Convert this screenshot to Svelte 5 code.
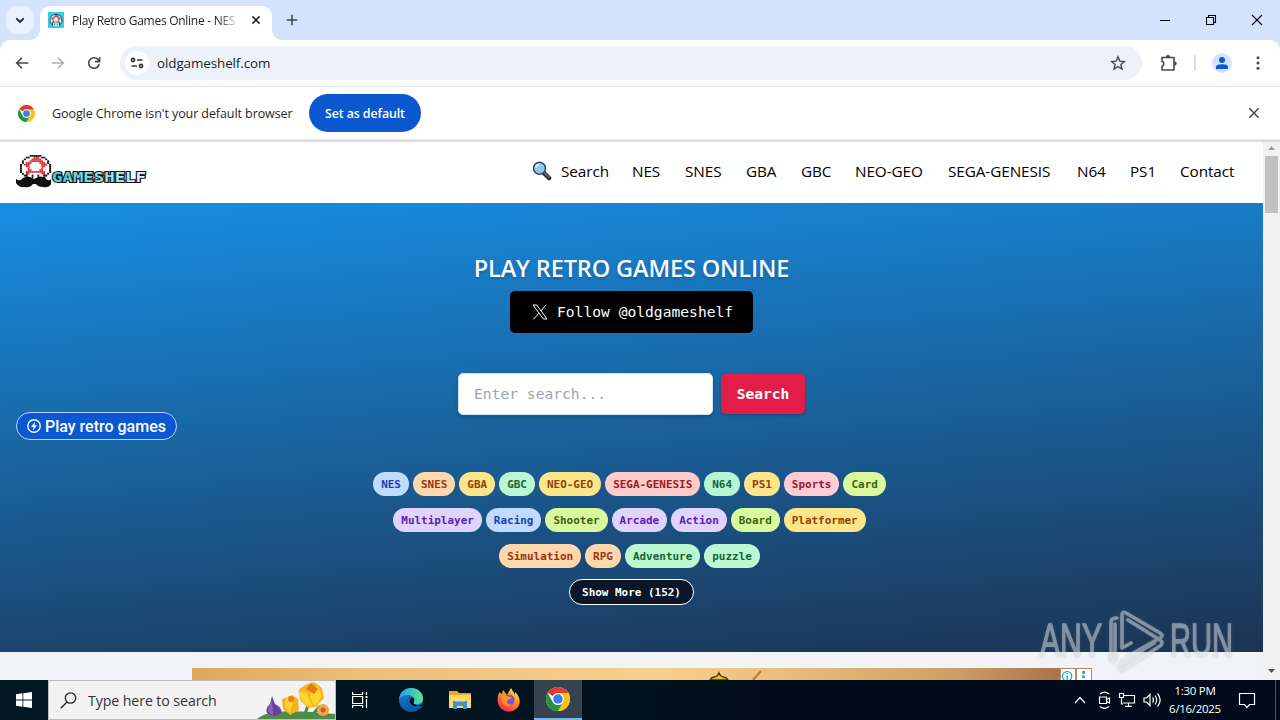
<script lang="ts">
    let search = $state("");

    const links = ["Search", "NES", "SNES", "GBA", "GBC", "NEO-GEO", "SEGA-GENESIS", "N64", "PS1", "Contact"];

    const tagRows = [
        [
            ["NES", "blue"], ["SNES", "orange"], ["GBA", "amber"], ["GBC", "green"], ["NEO-GEO", "amber"],
            ["SEGA-GENESIS", "red"], ["N64", "emerald"], ["PS1", "amber"], ["Sports", "rose"], ["Card", "lime"],
        ],
        [
            ["Multiplayer", "violet"], ["Racing", "blue"], ["Shooter", "lime"], ["Arcade", "violet"],
            ["Action", "violet"], ["Board", "lime"], ["Platformer", "amber"],
        ],
        [["Simulation", "orange"], ["RPG", "orange"], ["Adventure", "green"], ["puzzle", "green"]],
    ];

    // one character per pixel: k outline, r cap, d shade, w white
    const mushroom = [
        "......kkkkkk......",
        "....kkwwrrrwkk....",
        "...kwwwrrrrrwwk...",
        "..kwwwrrrrrrrwwk..",
        "..kwrrrwwwwrrrwk..",
        ".kwrrrwwwwwwrrrwk.",
        ".kwwrrwwwwwwrrwwk.",
        ".kwwwrwwwwwwrwwwk.",
        ".kwwwrrwwwwrrwwwk.",
        ".kwwrrrrrrrrrrwwk.",
        "..kwdrwwwwwwrdwk..",
        "...kkwwkwwkwwkk...",
        "....kwwkwwkwwk....",
        "....kwwwwwwwwk....",
    ];
    const ink = { k: "#111", r: "#e22a2f", d: "#b91c25", w: "#fff" };
</script>

{#snippet chrome(size)}
    <svg width={size} height={size} viewBox="0 0 48 48">
        <circle cx="24" cy="24" r="24" fill="#fff" />
        <path fill="#e33b2e" d="M24 24 3.2 12A24 24 0 0 1 44.8 12Z" />
        <path fill="#fbc116" d="M24 12H44.8A24 24 0 0 1 24 48L34.4 30Z" />
        <path fill="#229342" d="M3.2 12A24 24 0 0 0 24 48L34.4 30A12 12 0 0 1 13.6 30Z" />
        <circle cx="24" cy="24" r="12" fill="#fff" />
        <circle cx="24" cy="24" r="9.5" fill="#3b7ded" />
    </svg>
{/snippet}

{#snippet sprite(width, height)}
    <svg {width} {height} viewBox="0 0 18 14" preserveAspectRatio="none">
        {#each mushroom as row, y}
            {#each row as cell, x}
                {#if cell != "."}
                    <rect {x} {y} width="1.05" height="1.05" fill={ink[cell]} />
                {/if}
            {/each}
        {/each}
    </svg>
{/snippet}

<div class="screen">
    <div class="tabstrip">
        <button class="tab-search" aria-label="Search tabs">
            <svg width="10" height="7" viewBox="0 0 10 7"><path d="M1.3 1.3 5 5l3.7-3.7" fill="none" stroke="#1f1f1f" stroke-width="1.8" /></svg>
        </button>
        <div class="tab">
            <span class="favicon">{@render sprite(14, 12)}</span>
            <span class="tab-title">Play Retro Games Online - NES</span>
            <svg width="10" height="10" viewBox="0 0 10 10"><path d="m1.4 1.4 7.2 7.2m0-7.2L1.4 8.6" stroke="#1f1f1f" stroke-width="1.5" /></svg>
        </div>
        <svg class="plus" width="12" height="12" viewBox="0 0 12 12"><path d="M6 .8v10.4M.8 6h10.4" stroke="#444" stroke-width="1.5" /></svg>
        <div class="window-buttons">
            <svg width="12" height="12" viewBox="0 0 12 12"><path d="M1 6.5h10" stroke="#000" /></svg>
            <svg width="12" height="12" viewBox="0 0 12 12"><path d="M1.5 3.5h7v7h-7zM3.5 3V1.5h7v7H9" fill="none" stroke="#000" stroke-width="1.1" /></svg>
            <svg width="12" height="12" viewBox="0 0 12 12"><path d="m1 1 10 10m0-10L1 11" stroke="#000" stroke-width="1.1" /></svg>
        </div>
    </div>

    <div class="toolbar">
        <div class="history">
            <svg width="14" height="14" viewBox="0 0 14 14"><path d="M13.3 7H2M7 1.7 1.7 7 7 12.3" fill="none" stroke="#474747" stroke-width="1.6" /></svg>
            <svg width="14" height="14" viewBox="0 0 14 14"><path d="M.7 7H12M7 1.7 12.3 7 7 12.3" fill="none" stroke="#b0b0b0" stroke-width="1.6" /></svg>
            <svg width="14" height="14" viewBox="0 0 14 14"><path d="M12.2 8a5.3 5.3 0 1 1-1.3-4.6l1.6 1.8M12.6 1v4.6H8" fill="none" stroke="#474747" stroke-width="1.6" /></svg>
        </div>
        <div class="omnibox">
            <span class="site-info">
                <svg width="14" height="12" viewBox="0 0 14 12"><g fill="none" stroke="#333" stroke-width="1.6"><circle cx="3" cy="3" r="1.6" /><path d="M7 3h5.500M1.500 9H7" /><circle cx="11" cy="9" r="1.6" /></g></svg>
            </span>
            <span class="url">oldgameshelf.com</span>
            <svg width="16" height="16" viewBox="0 0 16 16"><path d="m8 1.8 1.8 4.3 4.6.4-3.5 3 1.1 4.6-4-2.5-4 2.5 1.1-4.6-3.5-3 4.6-.4z" fill="none" stroke="#474747" stroke-width="1.4" /></svg>
        </div>
        <svg class="puzzle" width="18" height="18" viewBox="0 0 18 18"><path d="M2 3.5h12V16H2v-3.7c2.400-.8 2.400-4.200 0-5z" fill="none" stroke="#474747" stroke-width="1.6" stroke-linejoin="round" /><path d="M6 3c0-3 4-3 4 0zM14.5 7.500c3 0 3 4 0 4z" fill="#474747" /></svg>
        <span class="separator"></span>
        <span class="profile">
            <svg width="12" height="12" viewBox="0 0 12 12" fill="#0b57d0"><circle cx="6" cy="3" r="3" /><path d="M0 12V9.8C0 6.5 12 6.5 12 9.8V12z" /></svg>
        </span>
        <svg width="4" height="16" viewBox="0 0 4 16" fill="#474747"><circle cx="2" cy="2.8" r="1.5" /><circle cx="2" cy="8" r="1.5" /><circle cx="2" cy="13.2" r="1.5" /></svg>
    </div>

    <div class="infobar">
        {@render chrome(17)}
        <span class="info-text">Google Chrome isn't your default browser</span>
        <button class="default-button">Set as default</button>
        <svg class="dismiss" width="12" height="12" viewBox="0 0 12 12"><path d="m1.3 1.3 9.4 9.4m0-9.4-9.4 9.4" stroke="#474747" stroke-width="1.5" /></svg>
    </div>

    <div class="viewport">
        <div class="page">
            <header>
                <svg class="logo" width="134" height="36" viewBox="0 0 134 36">
                    <g transform="translate(3 1)">{@render sprite(35, 25)}</g>
                    <path d="M1 25q4 3 7-1 5-3 9 0l2 1 2-1q5-3 9 0 4 4 6 1v5q-2 4-8 3-5 0-7-3h-3q-3 4-8 3-6 1-9-4z" fill="#111" />
                    <defs>
                        <linearGradient id="cyan" x2="1"><stop stop-color="#45cddb" /><stop offset=".6" stop-color="#96e2e7" /><stop offset="1" stop-color="#f2fbfb" /></linearGradient>
                    </defs>
                    <text x="37" y="28" textLength="94" lengthAdjust="spacingAndGlyphs" fill="url(#cyan)" stroke="#111" stroke-width="2" paint-order="stroke">GAMESHELF</text>
                </svg>
                <nav>
                    <svg class="glass" width="20" height="20" viewBox="0 0 20 20">
                        <path d="m11 11 6 6" stroke="#222" stroke-width="4.500" stroke-linecap="round" />
                        <path d="m12.5 12 4.5 4.5" stroke="#666" stroke-width="2" stroke-linecap="round" />
                        <circle cx="7.5" cy="7.3" r="6" fill="#8fc7f2" stroke="#34495b" stroke-width="1.5" />
                        <path d="M4 7c0-2 1.4-3.4 3.5-3.4" fill="none" stroke="#d5edff" stroke-width="1.6" />
                    </svg>
                    {#each links as link}
                        <a href="#top">{link}</a>
                    {/each}
                </nav>
            </header>

            <main>
                <h1>PLAY RETRO GAMES ONLINE</h1>
                <a class="follow" href="#top">
                    <svg width="16" height="16" viewBox="0 0 16 16" fill="none" stroke="#fff"><path d="M1 1h3.6L15 15h-3.6zM14.2.8 8.9 6.9M7 9.2 1.5 15.3" stroke-width="1" /></svg>
                    <span>Follow @oldgameshelf</span>
                </a>
                <form onsubmit={(e) => e.preventDefault()}>
                    <input type="text" placeholder="Enter search..." bind:value={search} />
                    <button>Search</button>
                </form>
                <div class="tags">
                    {#each tagRows as row}
                        <div class="tag-row">
                            {#each row as [name, color]}
                                <span class="tag {color}">{name}</span>
                            {/each}
                        </div>
                    {/each}
                </div>
                <button class="more">Show More (152)</button>
            </main>

            <div class="ad">
                <svg width="900" height="12" viewBox="0 0 900 12">
                    <path d="M518 12q2-3 5-3 3-1 4-4 1 3 4 4 3 0 5 3z" fill="#edbd32" stroke="#4a3415" stroke-width="1.3" />
                    <path d="m561 12 8-9" stroke="#b47748" stroke-width="2" />
                </svg>
                <div class="ad-choices">
                    <svg width="16" height="12" viewBox="0 0 16 12"><circle cx="7" cy="8" r="5.4" fill="none" stroke="#00a1c4" stroke-width="1.3" /><path d="M7 7v5M7 4v1.6" stroke="#00a1c4" stroke-width="1.5" /></svg>
                    <svg width="16" height="12" viewBox="0 0 16 12" fill="#00a1c4"><path d="M6 2h3v3H6zM6 7h3v3H6z" /></svg>
                </div>
            </div>

            <div class="anchor">
                <svg width="16" height="16" viewBox="0 0 16 16"><circle cx="8" cy="8" r="6.2" fill="none" stroke="#fff" stroke-width="1.4" /><path d="M9 3.8 5 9h2.5l-.7 3.4L11 7.2H8.5z" fill="#fff" /></svg>
                Play retro games
            </div>
        </div>

        <div class="scrollbar">
            <svg width="17" height="16" viewBox="0 0 17 16"><path d="M5 10h7L8.5 6z" fill="#a0a0a0" /></svg>
            <div class="thumb"></div>
            <svg width="17" height="18" viewBox="0 0 17 18"><path d="M5 7h7l-3.5 4z" fill="#505050" /></svg>
        </div>
    </div>

    <div class="taskbar">
        <div class="start">
            <svg width="16" height="16" viewBox="0 0 16 16" fill="#fff"><path d="M0 2.2 6.5 1.3v6.3H0zM7.3 1.2 16 0v7.6H7.3zM0 8.4h6.5v6.3L0 13.8zM7.3 8.4H16V16l-8.7-1.2z" /></svg>
        </div>
        <div class="search-box">
            <svg width="17" height="17" viewBox="0 0 17 17"><circle cx="10.5" cy="6" r="5.2" fill="none" stroke="#222" stroke-width="1.3" /><path d="M7 10 .8 16.2" stroke="#222" stroke-width="1.3" /></svg>
            <span>Type here to search</span>
            <svg class="flowers" width="78" height="38" viewBox="0 0 78 38">
                <path d="M0 38c10-10 40-9 78-5v5z" fill="#54894e" />
                <path d="M34 38 31 27M46 38 52 22M52 38l11-13M46 32l6 6" stroke="#439142" stroke-width="3" fill="none" />
                <path d="m15 15 3 8q8 4 6 9-6 6-14 0-2-5 3-9z" fill="#65439c" />
                <path d="m15 20 1 14-5-3q0-6 4-11z" fill="#8463b5" />
                <path d="m25 18 6-2 4-2 6 4 1 11-9 5-7-6z" fill="#f7b218" />
                <path d="m28 19 4-4 4 6-3 11-5-6z" fill="#ffd434" /><circle cx="34" cy="18" r="3" fill="#e98113" />
                <path d="m42 8 8-5 7-2 8 6 2 10-8 9-8 1-8-8z" fill="#f9b51c" />
                <path d="m41 10 8 2 7 14-9-3zM56 7l4-2 5 9-7 12-5-10z" fill="#ffd62f" />
                <path d="m49 8 5-6 7 6-4 5z" fill="#e57a15" />
                <circle cx="66" cy="29" r="6" fill="#efa54f" /><circle cx="66" cy="29" r="2.5" fill="#bd6418" />
            </svg>
        </div>
        <div class="task">
            <svg width="18" height="18" viewBox="0 0 18 18" fill="none" stroke="#fff" stroke-width="1.2"><path d="M1.6 5.5h10v7h-10zM1.6 1v2.5h10V1M1.6 17v-2.5h10V17M15.5 1v3M15.5 8v9" /><path d="M14.5 5h2v2h-2z" fill="#fff" stroke="none" /></svg>
        </div>
        <div class="apps">
            <div class="task">
                <svg width="24" height="24" viewBox="0 0 24 24">
                    <defs>
                        <linearGradient id="edge-top"><stop stop-color="#279fe8" /><stop offset="1" stop-color="#5be48f" /></linearGradient>
                        <linearGradient id="edge-low" x2="0" y2="1"><stop stop-color="#1689da" /><stop offset="1" stop-color="#1453a5" /></linearGradient>
                    </defs>
                    <circle cx="12" cy="12" r="12" fill="url(#edge-low)" />
                    <path d="M0 11C1 4 6 0 12 0c7 0 12 5 12 10 0 5-4 7-8 6-3-.5-2-2-1-4 0-3-3-5-6-5-4 0-7 2-9 4z" fill="url(#edge-top)" />
                    <path d="M15 11c-3-3-7 0-6 4 1 5 8 6 13 3l2-3v3l-1 1c-5 5-15 1-15-6 0-4 5-6 7-2z" fill="#1453a5" />
                    <path d="M15 10c-3-1-5 2-4 5 2 4 8 4 12 1l1 2c-4 1-6-1-9-2-1-1 1-3 0-6z" fill="#021622" />
                </svg>
            </div>
            <div class="task">
                <svg width="22" height="20" viewBox="0 0 22 20"><path d="M0 1h8l2 2h12v15H0z" fill="#e8a723" /><path d="M0 5h22v13H0z" fill="#ffd86b" /><path d="M4 11h14v8h-4v-3H8v3H4z" fill="#3994d3" /><path d="M6 11h10v1H6z" fill="#72c0ee" /></svg>
            </div>
            <div class="task">
                <svg width="24" height="24" viewBox="0 0 24 24">
                    <defs><linearGradient id="fire" x1=".8" x2=".2" y2="1"><stop stop-color="#fff044" /><stop offset=".45" stop-color="#ff8b22" /><stop offset="1" stop-color="#f21e66" /></linearGradient></defs>
                    <path d="M2 4 5 6 6 2l4 5 4-7 3 5 1 2V4c5 4 6 11 3 15-6 8-18 5-20-4-1-4 0-7 1-11z" fill="url(#fire)" />
                    <circle cx="12" cy="12" r="5.5" fill="#7950d9" /><path d="M5 8c5-2 7 2 10 1-1 4-4 1-5 4-1 2 2 4 5 3-6 5-12 0-10-8z" fill="#ff9624" />
                </svg>
            </div>
            <div class="task active">{@render chrome(24)}</div>
        </div>
        <div class="tray">
            <svg width="12" height="8" viewBox="0 0 12 8"><path d="m1 7 5-5.5L11 7" /></svg>
            <svg width="14" height="18" viewBox="0 0 14 18"><path d="M1.5 6h7v6.5h-7zM8.5 8.5 11.5 7v5l-3-1.5M2 3c3-2.6 6-2.6 9 0M2 15.5c3 2.6 6 2.6 9 0" /></svg>
            <svg width="18" height="16" viewBox="0 0 18 16"><path d="M6 3.5h10.5v7.5H5M10.5 11v3M7 14.3h7M1.5 1.5h4v4h-4zM3.5 5.5V12H5" /></svg>
            <svg width="18" height="16" viewBox="0 0 18 16"><path d="M1 6h2.5L7 2.5v11L3.5 10H1zM9.5 5.5c1.3 1.6 1.3 3.4 0 5M12 3.5c2.3 3 2.3 6 0 9M14.5 1.5c3.3 4 3.3 9 0 13" /></svg>
        </div>
        <div class="clock"><span>1:30 PM</span><span>6/16/2025</span></div>
        <svg class="notice" width="18" height="17" viewBox="0 0 18 17"><path d="M1.5 1.5h15v11h-5L9 15.5 6.500 12.5h-5z" fill="none" stroke="#fff" stroke-width="1.2" /></svg>
        <span class="peek"></span>
    </div>

    <svg class="watermark" width="216" height="72" viewBox="0 0 216 72">
        <text x="4" y="49" textLength="62" lengthAdjust="spacingAndGlyphs">ANY</text>
        <text x="134" y="49" textLength="63" lengthAdjust="spacingAndGlyphs">RUN</text>
        <g fill="none" stroke-linejoin="round" stroke-linecap="round">
            <path d="M81 11q-6 0-6 4v36q0 4 4 2V17M86 41V8q0-4 4-2l34 20q4 3 0 5L92 49M92 13l32 20q4 3 0 6L88 62q-4 3-4-2 0-3 3-5l31-19M86 41l9-5" />
        </g>
    </svg>
</div>

<style>
    :global(body) {
        margin: 0;
        overflow: hidden;
    }

    * {
        box-sizing: border-box;
    }

    svg {
        display: block;
        flex: none;
    }

    button {
        border: none;
        padding: 0;
        font: inherit;
        cursor: pointer;
    }

    a {
        color: inherit;
        text-decoration: none;
    }

    .screen {
        position: relative;
        width: 1280px;
        height: 720px;
        display: flex;
        flex-direction: column;
        background: #d3e3fd;
        color: #1f1f1f;
        font-family: "Open Sans", "Noto Sans", sans-serif;
        overflow: hidden;
        white-space: nowrap;
    }

    .tabstrip {
        height: 40px;
        flex: none;
        display: flex;
        align-items: center;
        padding-left: 6px;
    }

    .tab-search {
        width: 28px;
        height: 28px;
        display: grid;
        place-items: center;
        border-radius: 10px;
        background: #e9f1fe;
    }

    .tab {
        position: relative;
        width: 232px;
        height: 34px;
        margin: 6px 0 0 6px;
        padding: 0 11px 6px 8px;
        display: flex;
        align-items: center;
        background: #fff;
        border-radius: 10px 10px 0 0;
    }

    .tab::before, .tab::after {
        content: "";
        position: absolute;
        bottom: 0;
        left: -10px;
        width: 10px;
        height: 10px;
        background: radial-gradient(circle at 0 0, transparent 9.5px, #fff 10px);
    }

    .tab::after {
        left: auto;
        right: -10px;
        background: radial-gradient(circle at 100% 0, transparent 9.5px, #fff 10px);
    }

    .favicon {
        width: 16px;
        height: 16px;
        display: grid;
        place-items: center;
        background: #35cde4;
    }

    .tab-title {
        width: 165px;
        margin: 0 14px 0 8px;
        overflow: hidden;
        font-size: 12px;
        letter-spacing: -0.27px;
        mask-image: linear-gradient(90deg, #000 146px, transparent 168px);
    }

    .plus {
        margin-left: 14px;
    }

    .window-buttons {
        margin-left: auto;
        display: flex;
        gap: 34px;
        padding-right: 17px;
    }

    .toolbar {
        height: 46px;
        flex: none;
        display: flex;
        align-items: center;
        padding-right: 20px;
        background: #fff;
        border-radius: 10px 10px 0 0;
    }

    .history {
        display: flex;
        gap: 22px;
        padding: 0 19px 0 15px;
    }

    .omnibox {
        width: 1022px;
        height: 34px;
        display: flex;
        align-items: center;
        padding: 0 16px 0 5px;
        border-radius: 17px;
        background: #edf1fa;
    }

    .site-info {
        width: 24px;
        height: 24px;
        display: grid;
        place-items: center;
        border-radius: 50%;
        background: #fff;
    }

    .url {
        flex: 1;
        margin-left: 8px;
        font-size: 13.4px;
        letter-spacing: -0.08px;
    }

    .puzzle {
        margin-left: 18px;
    }

    .separator {
        width: 2px;
        height: 16px;
        margin: 0 16px 0 16px;
        background: #d9dfec;
    }

    .profile {
        width: 20px;
        height: 20px;
        margin-right: 24px;
        display: grid;
        place-items: center;
        border-radius: 50%;
        background: #d3e3fd;
    }

    .infobar {
        height: 54px;
        flex: none;
        display: flex;
        align-items: center;
        padding: 0 20px 1px 18px;
        background: linear-gradient(#fff 52px, #d0d0d0 53px);
        border-top: 1px solid #dfe3e9;
    }

    .info-text {
        width: 241px;
        margin: 0 16px 0 17px;
        font-size: 12.5px;
        letter-spacing: -0.08px;
    }

    .default-button {
        width: 112px;
        height: 38px;
        border-radius: 19px;
        background: #0b57d0;
        color: #fff;
        font-size: 12.4px;
        font-weight: 600;
        letter-spacing: -0.1px;
    }

    .dismiss {
        margin-left: auto;
    }

    .viewport {
        height: 540px;
        flex: none;
        display: flex;
    }

    .page {
        position: relative;
        width: 1263px;
        overflow: hidden;
        background: #f1f3f6;
        font-family: "DejaVu Sans Mono", "Liberation Mono", monospace;
    }

    header {
        height: 63px;
        display: flex;
        align-items: center;
        justify-content: space-between;
        padding: 0 27px 0 15px;
        background: linear-gradient(#d0d0d0, #fff 3px);
    }

    .logo {
        margin-top: 1px;
    }

    .logo text {
        font: bold 13.5px "DejaVu Sans Mono", monospace;
    }

    nav {
        display: grid;
        grid-template-columns: 20px 47px 29px 37px 31px 30px 69px 105px 29px 26px 56px;
        column-gap: 24px;
        align-items: center;
        margin-top: -2px;
        color: #000;
        font-family: "Open Sans", sans-serif;
        font-size: 15.3px;
        letter-spacing: -0.08px;
    }

    .glass {
        margin-left: 15px;
    }

    main {
        height: 449px;
        display: flex;
        flex-direction: column;
        align-items: center;
        padding-top: 48px;
        background: linear-gradient(175deg, #178ee2, #1c3353);
    }

    h1 {
        margin: 0;
        height: 40px;
        color: #f8fafc;
        font: 600 23.5px/35px "Open Sans", sans-serif;
        letter-spacing: -0.13px;
        text-shadow: 0 2px 3px #0003;
    }

    .follow {
        width: 243px;
        height: 42px;
        display: flex;
        align-items: center;
        gap: 9px;
        padding-left: 22px;
        border-radius: 5px;
        background: #000;
        color: #fff;
        font-size: 14.63px;
    }

    .follow span {
        padding-bottom: 2px;
    }

    form {
        display: flex;
        align-items: center;
        gap: 8px;
        margin-top: 40px;
    }

    input {
        width: 255px;
        height: 42px;
        padding: 0 15px 2px;
        border: 1px solid #d5e3f3;
        border-radius: 5px;
        background: #fff;
        font: 14.63px "DejaVu Sans Mono", monospace;
        box-shadow: 0 2px 4px #0003;
    }

    input::placeholder {
        color: #9ca3af;
    }

    form button {
        width: 84px;
        height: 40px;
        padding-bottom: 2px;
        border-radius: 5px;
        background: #e11d48;
        color: #fff;
        font-size: 14.6px;
        font-weight: bold;
        box-shadow: 0 1px 3px #0004;
    }

    .tags {
        display: flex;
        flex-direction: column;
        gap: 12px;
        margin-top: 57px;
        padding-right: 4px;
    }

    .tag-row {
        display: flex;
        justify-content: center;
        gap: 4px;
    }

    .tag {
        height: 24px;
        padding: 0 8px;
        border-radius: 12px;
        font-size: 10.96px;
        font-weight: bold;
        line-height: 25px;
    }

    .blue { background: #bfdbfe; color: #1e40af; }
    .orange { background: #fed7aa; color: #9a3412; }
    .amber { background: #fde68a; color: #92400e; }
    .green { background: #bbf7d0; color: #166534; }
    .emerald { background: #b5f5d3; color: #166534; }
    .red { background: #fecaca; color: #991b1b; }
    .rose { background: #fecdd3; color: #9f1239; }
    .lime { background: #d9f99d; color: #3f6212; }
    .violet { background: #e0d4fe; color: #5b21b6; }

    .more {
        width: 125px;
        height: 26px;
        margin-top: 11px;
        border: 1px solid #fff;
        border-radius: 13px;
        background: #0b1728;
        color: #fff;
        font-size: 10.96px;
        font-weight: bold;
    }

    .ad {
        width: 900px;
        height: 12px;
        margin: 16px 0 0 192px;
        display: flex;
        background: linear-gradient(90deg, #dda85c, #ecc079 20%, #f6d18a 52%, #e9bd78 66%, #cd9e66 85%, #a97549 96%);
    }

    .ad-choices {
        display: flex;
        margin-left: -32px;
    }

    .ad-choices svg {
        background: #fff;
        border: 1px solid #b98567;
        border-bottom: none;
    }

    .anchor {
        position: absolute;
        left: 16px;
        top: 272px;
        width: 161px;
        height: 28px;
        display: flex;
        align-items: center;
        gap: 3px;
        padding-left: 9px;
        border: 1px solid #b9d4fb;
        border-radius: 14px;
        background: #0b57d0;
        color: #fff;
        font: 500 16px Roboto, sans-serif;
    }

    .scrollbar {
        width: 17px;
        display: flex;
        flex-direction: column;
        align-items: center;
        justify-content: space-between;
        background: linear-gradient(#d0d0d0, #f1f1f1 3px);
    }

    .thumb {
        width: 13px;
        height: 57px;
        margin-bottom: auto;
        background: #c1c1c1;
    }

    .taskbar {
        height: 40px;
        flex: none;
        display: flex;
        align-items: center;
        background: linear-gradient(90deg, #011822, #011520 35%, #000c1a 60%, #000a1b);
        color: #fff;
    }

    .start, .task {
        width: 48px;
        height: 40px;
        display: grid;
        place-items: center;
    }

    .search-box {
        width: 288px;
        height: 40px;
        display: flex;
        align-items: center;
        padding-left: 11px;
        border: 1px solid #bcbcbc;
        background: #f2f2f2;
        color: #333;
        font-size: 14.2px;
        letter-spacing: -0.1px;
    }

    .search-box span {
        width: 128px;
        margin-left: 11px;
    }

    .flowers {
        margin-left: auto;
    }

    .apps {
        display: flex;
        gap: 1px;
        margin-left: 3px;
    }

    .active {
        background: #34434e;
        border-bottom: 2px solid #76b9ed;
    }

    .tray {
        display: flex;
        align-items: center;
        gap: 7px;
        margin-left: auto;
        margin-right: 7px;
    }

    .tray svg {
        fill: none;
        stroke: #fff;
        stroke-width: 1.2;
    }

    .tray svg:nth-child(2) {
        margin: 0 -1px 0 5px;
    }

    .clock {
        width: 54px;
        display: flex;
        flex-direction: column;
        align-items: center;
        font-size: 11.5px;
        line-height: 18px;
        letter-spacing: -0.3px;
    }

    .notice {
        margin: 0 19px 0 16px;
    }

    .peek {
        width: 5px;
        height: 40px;
        border-left: 1px solid #4a5662;
    }

    .watermark {
        position: absolute;
        left: 1036px;
        top: 607px;
        opacity: 0.55;
        filter: drop-shadow(0 0 1.5px #7779);
    }

    .watermark text {
        font: 47px "Liberation Sans", sans-serif;
        fill: #d7dde3;
        stroke: #d7dde3;
        stroke-width: 1.4px;
    }

    .watermark g {
        stroke: #d7dde3;
        stroke-width: 3.6;
    }
</style>
